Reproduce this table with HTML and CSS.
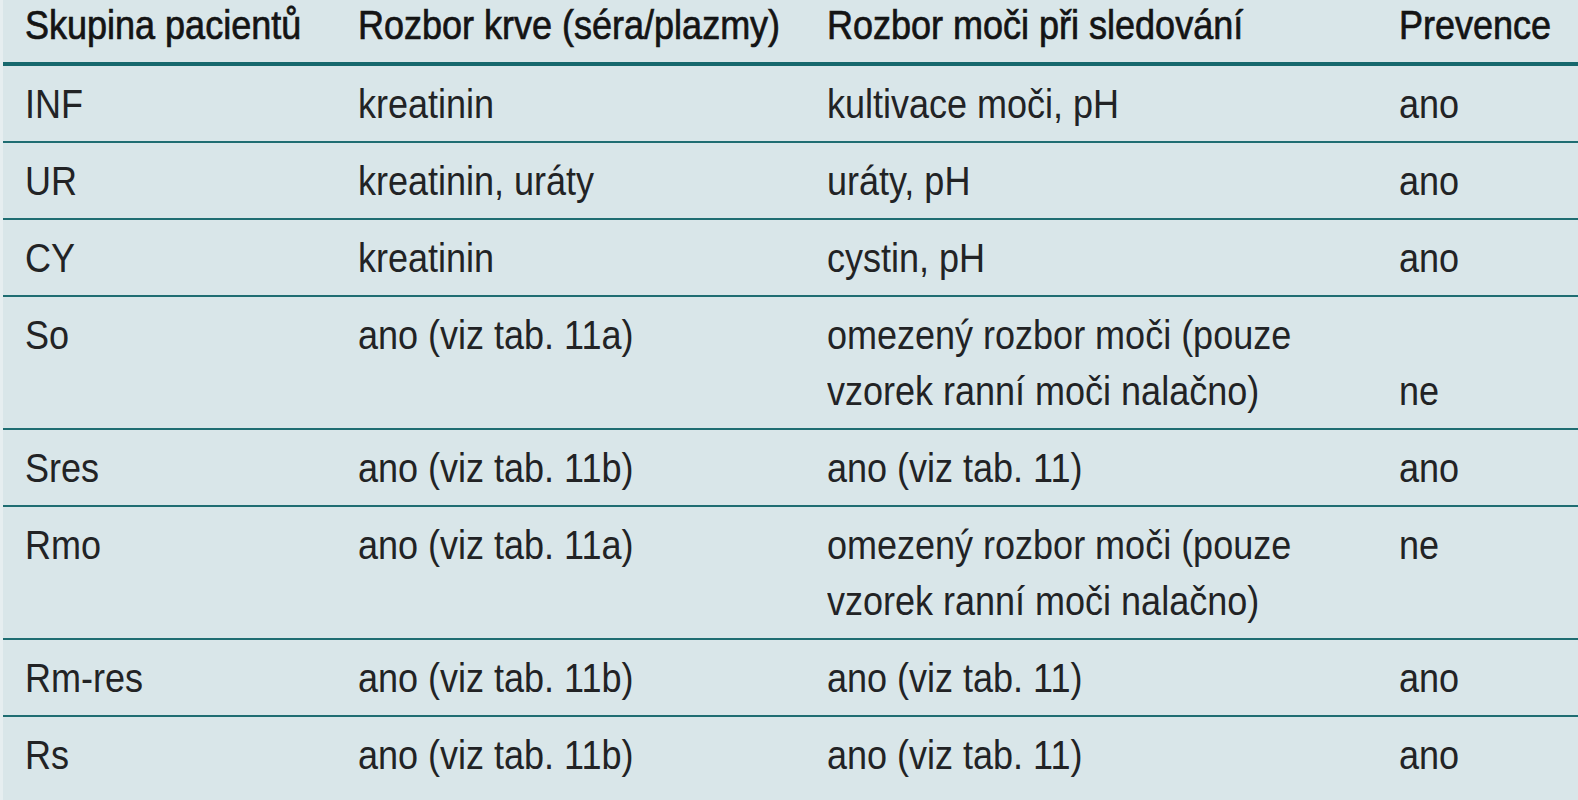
FILE: index.html
```html
<!DOCTYPE html>
<html lang="cs">
<head>
<meta charset="utf-8">
<title>Skupina pacientů</title>
<link rel="stylesheet" href="styles.css">
</head>
<body>
<div class="page">
<table class="grid">
  <colgroup>
    <col class="c1"><col class="c2"><col class="c3"><col class="c4">
  </colgroup>
  <thead>
    <tr>
      <th><span class="t">Skupina pacientů</span></th>
      <th><span class="t">Rozbor krve (séra/plazmy)</span></th>
      <th><span class="t">Rozbor moči při sledování</span></th>
      <th><span class="t">Prevence</span></th>
    </tr>
  </thead>
  <tbody>
    <tr><td><span class="t">INF</span></td><td><span class="t">kreatinin</span></td><td><span class="t">kultivace moči, pH</span></td><td><span class="t">ano</span></td></tr>
    <tr><td><span class="t">UR</span></td><td><span class="t">kreatinin, uráty</span></td><td><span class="t">uráty, pH</span></td><td><span class="t">ano</span></td></tr>
    <tr><td><span class="t">CY</span></td><td><span class="t">kreatinin</span></td><td><span class="t">cystin, pH</span></td><td><span class="t">ano</span></td></tr>
    <tr><td><span class="t">So</span></td><td><span class="t">ano (viz tab. 11a)</span></td><td><span class="t">omezený rozbor moči (pouze<br>vzorek ranní moči nalačno)</span></td><td class="bottom"><span class="t">ne</span></td></tr>
    <tr><td><span class="t">Sres</span></td><td><span class="t">ano (viz tab. 11b)</span></td><td><span class="t">ano (viz tab. 11)</span></td><td><span class="t">ano</span></td></tr>
    <tr><td><span class="t">Rmo</span></td><td><span class="t">ano (viz tab. 11a)</span></td><td><span class="t">omezený rozbor moči (pouze<br>vzorek ranní moči nalačno)</span></td><td><span class="t">ne</span></td></tr>
    <tr><td><span class="t">Rm-res</span></td><td><span class="t">ano (viz tab. 11b)</span></td><td><span class="t">ano (viz tab. 11)</span></td><td><span class="t">ano</span></td></tr>
    <tr class="last"><td><span class="t">Rs</span></td><td><span class="t">ano (viz tab. 11b)</span></td><td><span class="t">ano (viz tab. 11)</span></td><td><span class="t">ano</span></td></tr>
  </tbody>
</table>
</div>
</body>
</html>
```

FILE: styles.css
```css
html, body {
  margin: 0;
  padding: 0;
  background: #e6eef0;
  overflow: hidden;
}

.page {
  padding-left: 3px;
}

.grid {
  width: 1575px;
  border-collapse: collapse;
  table-layout: fixed;
  background: #d9e6e9;
  font-family: "Liberation Sans", Arial, sans-serif;
  font-size: 40px;
  color: #222325;
}

.c1 { width: 333px; }
.c2 { width: 469px; }
.c3 { width: 572px; }
.c4 { width: 201px; }

.t {
  display: inline-block;
  transform: scaleX(0.9);
  transform-origin: 0 50%;
  white-space: nowrap;
}

.grid th {
  text-align: left;
  font-weight: normal;
  color: #141414;
  -webkit-text-stroke: 0.7px #141414;
  line-height: 46px;
  height: 62px;
  padding: 2px 0 14px 22px;
  box-sizing: border-box;
  vertical-align: top;
  border-bottom: 4px solid #17686d;
  white-space: nowrap;
}

.grid td {
  text-align: left;
  line-height: 56px;
  padding: 10px 0 9px 22px;
  vertical-align: top;
  border-bottom: 2px solid #1f6d72;
  white-space: nowrap;
}

.grid tr.last td {
  border-bottom: none;
  padding-bottom: 40px;
}

.grid td.bottom {
  vertical-align: bottom;
}
```
